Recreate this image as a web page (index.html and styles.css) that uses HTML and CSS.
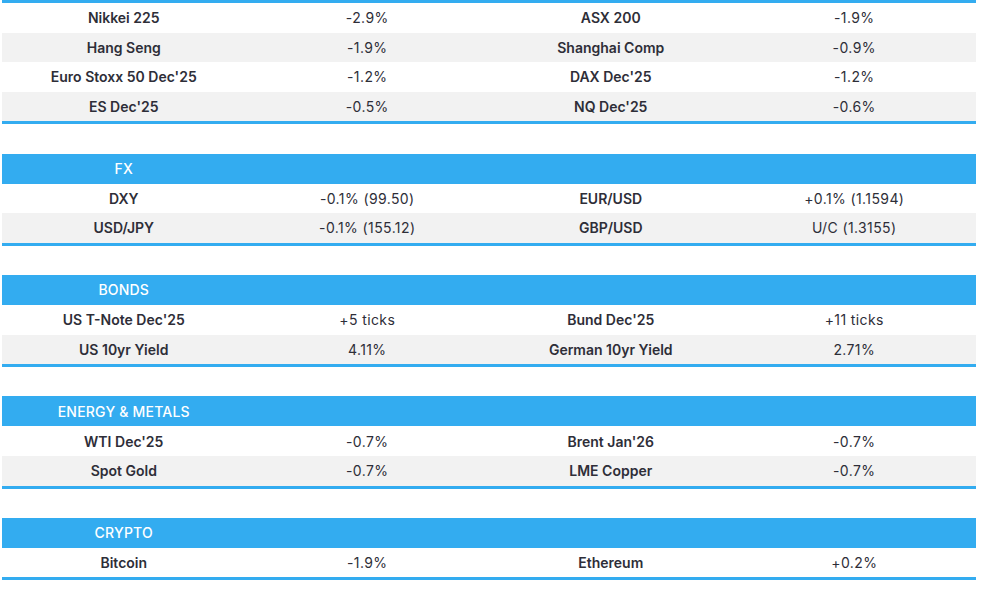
FILE: index.html
```html
<!DOCTYPE html>
<html lang="en">
<head>
<meta charset="utf-8">
<title>Markets</title>
<link rel="stylesheet" href="styles.css">
</head>
<body>
<div class="page">
  <div class="block">
    <div class="topstrip"></div>
    <div class="row"><div class="name">Nikkei 225</div><div class="val">-2.9%</div><div class="name">ASX 200</div><div class="val">-1.9%</div></div>
    <div class="row alt"><div class="name">Hang Seng</div><div class="val">-1.9%</div><div class="name">Shanghai Comp</div><div class="val">-0.9%</div></div>
    <div class="row"><div class="name">Euro Stoxx 50 Dec'25</div><div class="val">-1.2%</div><div class="name">DAX Dec'25</div><div class="val">-1.2%</div></div>
    <div class="row alt"><div class="name">ES Dec'25</div><div class="val">-0.5%</div><div class="name">NQ Dec'25</div><div class="val">-0.6%</div></div>
  </div>

  <div class="block">
    <div class="head"><div class="label">FX</div></div>
    <div class="row"><div class="name">DXY</div><div class="val">-0.1% (99.50)</div><div class="name">EUR/USD</div><div class="val">+0.1% (1.1594)</div></div>
    <div class="row alt"><div class="name">USD/JPY</div><div class="val">-0.1% (155.12)</div><div class="name">GBP/USD</div><div class="val">U/C (1.3155)</div></div>
  </div>

  <div class="block">
    <div class="head"><div class="label">BONDS</div></div>
    <div class="row"><div class="name">US T-Note Dec'25</div><div class="val">+5 ticks</div><div class="name">Bund Dec'25</div><div class="val">+11 ticks</div></div>
    <div class="row alt"><div class="name">US 10yr Yield</div><div class="val">4.11%</div><div class="name">German 10yr Yield</div><div class="val">2.71%</div></div>
  </div>

  <div class="block">
    <div class="head"><div class="label">ENERGY &amp; METALS</div></div>
    <div class="row"><div class="name">WTI Dec'25</div><div class="val">-0.7%</div><div class="name">Brent Jan'26</div><div class="val">-0.7%</div></div>
    <div class="row alt"><div class="name">Spot Gold</div><div class="val">-0.7%</div><div class="name">LME Copper</div><div class="val">-0.7%</div></div>
  </div>

  <div class="block">
    <div class="head"><div class="label">CRYPTO</div></div>
    <div class="row"><div class="name">Bitcoin</div><div class="val">-1.9%</div><div class="name">Ethereum</div><div class="val">+0.2%</div></div>
  </div>
</div>
</body>
</html>
```

FILE: styles.css
```css
html, body {
  margin: 0;
  padding: 0;
  background: #ffffff;
}

body {
  font-family: Inter, "Noto Sans", sans-serif;
  font-size: 14px;
  color: #2e2e38;
}

.page {
  width: 974px;
  margin-left: 2px;
  display: flex;
  flex-direction: column;
  gap: 29.2px;
}

.block {
  display: flex;
  flex-direction: column;
  border-bottom: 3px solid #33acf0;
}

.topstrip {
  height: 3px;
  background: #33acf0;
}

.head {
  height: 30px;
  background: #33acf0;
  display: grid;
  grid-template-columns: repeat(4, 1fr);
  align-items: center;
}

.label {
  color: #ffffff;
  text-align: center;
  font-weight: 500;
  letter-spacing: 0.2px;
}

.row {
  height: 29.6px;
  display: grid;
  grid-template-columns: repeat(4, 1fr);
  align-items: center;
  background: #ffffff;
}

.row.alt {
  background: #f2f2f2;
}

.name {
  text-align: center;
  font-weight: 600;
}

.val {
  text-align: center;
  font-weight: 400;
  letter-spacing: 0.4px;
}
```
